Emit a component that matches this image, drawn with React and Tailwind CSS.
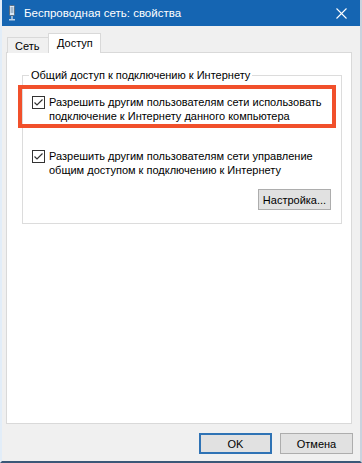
import React from "react";

function Check() {
  return (
    <div className="w-[13px] h-[13px] border border-[#333333] bg-white shrink-0 mt-[1px] flex items-center justify-center">
      <svg width="11" height="11" viewBox="0 0 11 11">
        <polyline points="1.5,5.5 4,8 9.5,2.5" fill="none" stroke="#333333" strokeWidth="1.2" />
      </svg>
    </div>
  );
}

export default function App() {
  return (
    <div className="w-[362px] h-[463px] bg-[#f0f0f0] flex flex-col border-l-2 border-l-[#e2edf8] border-r-2 border-r-[#c9d3de] border-b-2 border-b-[#3b5878] text-[11px] text-black font-['Liberation_Sans',Arial,sans-serif] leading-[14px] overflow-hidden whitespace-nowrap">
      {/* Title bar */}
      <div className="h-[26px] bg-[#1565b2] flex items-center shrink-0 -ml-[2px] -mr-[2px]">
        <svg className="ml-[8px]" width="8" height="16" viewBox="0 0 8 16">
          <rect x="1.5" y="0.5" width="5" height="10" rx="1" fill="#dbe9f6" stroke="#5d6f80" />
          <line x1="3.2" y1="2" x2="3.2" y2="8" stroke="#8aa3bb" />
          <line x1="4.8" y1="2" x2="4.8" y2="8" stroke="#8aa3bb" />
          <rect x="3" y="11" width="2" height="3" fill="#8fb3d6" />
          <rect x="1" y="14" width="6" height="1.5" fill="#b9d0e6" />
        </svg>
        <span className="ml-[8px] text-white text-[11.5px]">Беспроводная сеть: свойства</span>
        <div className="flex-1" />
        <svg className="mr-[15px]" width="11" height="11" viewBox="0 0 11 11">
          <line x1="0.5" y1="0.5" x2="10.5" y2="10.5" stroke="#ffffff" strokeWidth="1.1" />
          <line x1="10.5" y1="0.5" x2="0.5" y2="10.5" stroke="#ffffff" strokeWidth="1.1" />
        </svg>
      </div>

      <div className="flex-1 flex flex-col pl-[4px] pr-[8px] pt-[7px]">
        {/* Tabs */}
        <div className="flex items-end h-[20px] -mb-px relative z-10 pl-[1px]">
          <div className="w-[41px] h-[16px] border-l border-t border-[#d9d9d9] bg-[#f0f0f0] pl-[7px] leading-[17px]">Сеть</div>
          <div className="w-[53px] h-[20px] border-l border-t border-r border-[#d9d9d9] bg-white pl-[8px] leading-[18px]">Доступ</div>
        </div>

        {/* Panel */}
        <div className="h-[372px] bg-white border border-[#d9d9d9] pt-[15px] pl-[15px] pr-[10px]">
          <fieldset className="w-[320px] min-w-0 border border-[#dcdcdc] pl-[9px] pr-[10px] pt-[13px] pb-[13px]">
            <legend className="-ml-[3px] px-[2px] leading-[14px]">Общий доступ к подключению к Интернету</legend>
            <div className="relative flex">
              <div className="absolute -left-[14px] -top-[10px] w-[318px] h-[43px] border-4 border-[#f1502b]" />
              <Check />
              <div className="ml-[4px]">
                Разрешить другим пользователям сети использовать
                <br />
                подключение к Интернету данного компьютера
              </div>
            </div>
            <div className="flex mt-[26px]">
              <Check />
              <div className="ml-[4px]">
                Разрешить другим пользователям сети управление
                <br />
                общим доступом к подключению к Интернету
              </div>
            </div>
            <div className="flex justify-end mt-[12px]">
              <div className="w-[73px] h-[21px] bg-[#e1e1e1] border border-[#adadad] flex items-center justify-center">Настройка...</div>
            </div>
          </fieldset>
        </div>

        {/* Bottom buttons */}
        <div className="flex justify-end gap-[8px] mt-[9px] -mr-[1px]">
          <div className="w-[73px] h-[21px] bg-[#e1e1e1] border-2 border-[#2f73b5] flex items-center justify-center">OK</div>
          <div className="w-[73px] h-[21px] bg-[#e1e1e1] border border-[#adadad] flex items-center justify-center">Отмена</div>
        </div>
      </div>
    </div>
  );
}
